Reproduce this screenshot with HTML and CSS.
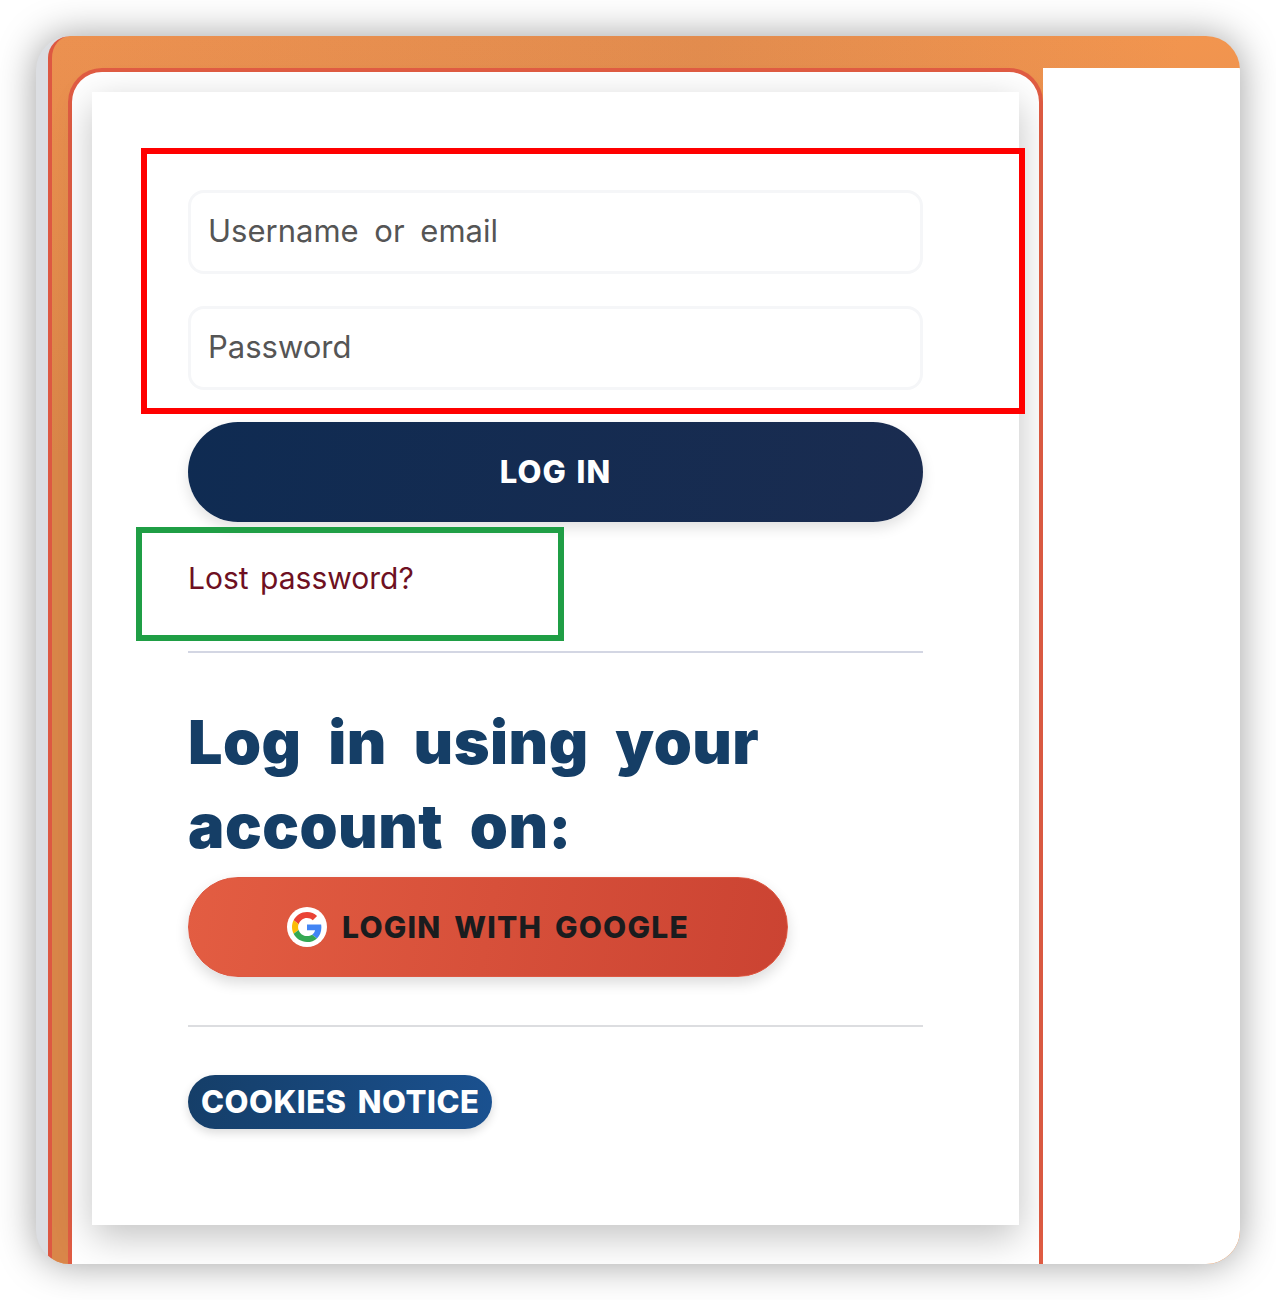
FILE: index.html
```html
<!DOCTYPE html>
<html lang="en">
<head>
    <meta charset="UTF-8">
    <meta name="viewport" content="width=device-width, initial-scale=1.0">
    <title>Log in</title>
    <link rel="stylesheet" href="styles.css">
</head>
<body>
    <div class="window">
        <div class="strip"></div>
        <div class="frame">
            <div class="frameRow">
                <div class="card">
                    <div class="panel">
                        <form class="loginForm">
                            <div class="fields">
                                <input class="field" type="text" placeholder="Username or email">
                                <input class="field" type="password" placeholder="Password">
                                <div class="mark markRed"></div>
                            </div>
                            <button class="loginBtn" type="button">LOG IN</button>
                            <div class="lost">
                                <a href="#">Lost password?</a>
                                <div class="mark markGreen"></div>
                            </div>
                        </form>
                        <hr class="line lineBlue">
                        <h2 class="socialTitle">Log in using your account on:</h2>
                        <a class="googleBtn" href="#">
                            <span class="googleIcon">
                                <svg viewBox="0 0 48 48" width="30" height="30">
                                    <path fill="#EA4335" d="M24 9.5c3.5 0 6.7 1.2 9.2 3.6l6.9-6.9C35.9 2.4 30.5 0 24 0 14.6 0 6.5 5.4 2.6 13.2l8 6.2C12.500 13.700 17.800 9.500 24 9.500z"/>
                                    <path fill="#4285F4" d="M47 24.600c0-1.600-.1-3.100-.4-4.600H24v9h12.900c-.6 3-2.200 5.500-4.700 7.200l7.700 6c4.500-4.200 7.100-10.300 7.100-17.600z"/>
                                    <path fill="#FBBC05" d="M10.500 28.700c-.5-1.400-.8-3-.8-4.700s.3-3.200.8-4.700l-8-6.200C.9 16.400 0 20.100 0 24s.9 7.600 2.600 10.900l7.900-6.200z"/>
                                    <path fill="#34A853" d="M24 48c6.500 0 11.900-2.100 15.900-5.800l-7.700-6c-2.200 1.400-4.900 2.300-8.200 2.300-6.200 0-11.500-4.200-13.400-9.800l-8 6.200C6.500 42.600 14.600 48 24 48z"/>
                                </svg>
                            </span>
                            LOGIN WITH GOOGLE
                        </a>
                        <hr class="line">
                        <a class="cookies" href="#">COOKIES NOTICE</a>
                    </div>
                </div>
                <div class="side"></div>
            </div>
        </div>
    </div>
</body>
</html>
```

FILE: styles.css
```css
*{
    box-sizing: border-box;
}
html, body{
    margin: 0;
    background: #fff;
}
body{
    padding: 36px;
    height: 1300px;
    font-family: "Inter", "Noto Sans", sans-serif;
    overflow: hidden;
}
a{
    text-decoration: none;
}
.window{
    display: flex;
    width: 1204px;
    height: 1228px;
    background: #dcdee2;
    border-radius: 34px;
    overflow: hidden;
    box-shadow: 0 0 38px rgba(0, 0, 0, 0.38);
}
.strip{
    width: 12px;
    flex: none;
}
.frame{
    flex: 1;
    padding-top: 32px;
    border-left: 4px solid #dd5842;
    border-top-left-radius: 22px;
    background:
        linear-gradient(180deg, rgba(217, 134, 73, 0) 0, #d98649 420px),
        linear-gradient(90deg, #ec9150 0%, #e28c4e 55%, #f2954f 95%);
}
.frameRow{
    display: flex;
    height: 100%;
    padding-left: 16px;
}
.card{
    width: 975px;
    flex: none;
    padding: 20px;
    background: #fff;
    border: 4px solid #e05c43;
    border-bottom: 0;
    border-radius: 34px 34px 0 0;
}
.side{
    flex: 1;
    background: #fff;
}
/* login panel */
.panel{
    width: 927px;
    height: 1133px;
    padding: 98px 96px 0;
    background: #fff;
    box-shadow: 0 12px 36px rgba(0, 0, 0, 0.24);
}
.fields{
    position: relative;
    display: flex;
    flex-direction: column;
    gap: 32px;
    margin-bottom: 32px;
}
.field{
    width: 100%;
    height: 84px;
    padding: 0 17px 3px;
    background: #fff;
    border: 3px solid #f5f6f8;
    border-radius: 16px;
    font-family: inherit;
    font-size: 31px;
    word-spacing: 7px;
}
.field::placeholder{
    color: #555;
    opacity: 1;
}
.mark{
    position: absolute;
    pointer-events: none;
}
.markRed{
    left: -47px;
    top: -42px;
    width: 884px;
    height: 266px;
    border: 6px solid #ff0000;
}
.markGreen{
    left: -52px;
    top: 5px;
    width: 428px;
    height: 114px;
    border: 6px solid #1f9e45;
}
.loginBtn{
    display: block;
    width: 100%;
    height: 100px;
    border: 0;
    border-radius: 50px;
    background: linear-gradient(100deg, #0f2b52, #1a2c50);
    box-shadow: 0 6px 14px rgba(0, 0, 0, 0.12);
    color: #fff;
    font-family: inherit;
    font-size: 31px;
    font-weight: 800;
    letter-spacing: 1px;
    word-spacing: 2px;
    padding-bottom: 3px;
}
.lost{
    position: relative;
    height: 129px;
    padding-top: 34px;
    font-size: 30px;
    line-height: 44px;
    word-spacing: 3px;
}
.lost a{
    color: #6e1022;
}
.line{
    height: 2px;
    margin: 0;
    border: 0;
    background: #dcdde0;
}
.lineBlue{
    background: #d3d6e3;
}
.socialTitle{
    margin: 47px 0 9px;
    max-width: 620px;
    color: #153e66;
    font-size: 61px;
    font-weight: 900;
    line-height: 84px;
    letter-spacing: 0.5px;
    word-spacing: 14px;
}
.googleBtn{
    display: flex;
    align-items: center;
    justify-content: center;
    gap: 15px;
    width: 600px;
    height: 100px;
    margin-bottom: 48px;
    border: 1px solid #dd5842;
    border-radius: 50px;
    background: linear-gradient(100deg, #e35d42, #cb4332);
    box-shadow: 0 6px 14px rgba(0, 0, 0, 0.14);
    color: #1a1c1e;
    font-size: 30px;
    font-weight: 800;
    letter-spacing: 1.2px;
    word-spacing: 5px;
}
.googleIcon{
    display: flex;
    align-items: center;
    justify-content: center;
    width: 40px;
    height: 40px;
    border-radius: 50%;
    background: #fff;
}
.cookies{
    display: inline-block;
    margin-top: 48px;
    padding: 0 13px;
    height: 54px;
    border-radius: 27px;
    background: linear-gradient(100deg, #153e68, #1a5190);
    box-shadow: 0 4px 10px rgba(0, 0, 0, 0.14);
    color: #fff;
    font-size: 31px;
    font-weight: 800;
    letter-spacing: 0.5px;
    word-spacing: 4px;
    line-height: 53px;
}
```
